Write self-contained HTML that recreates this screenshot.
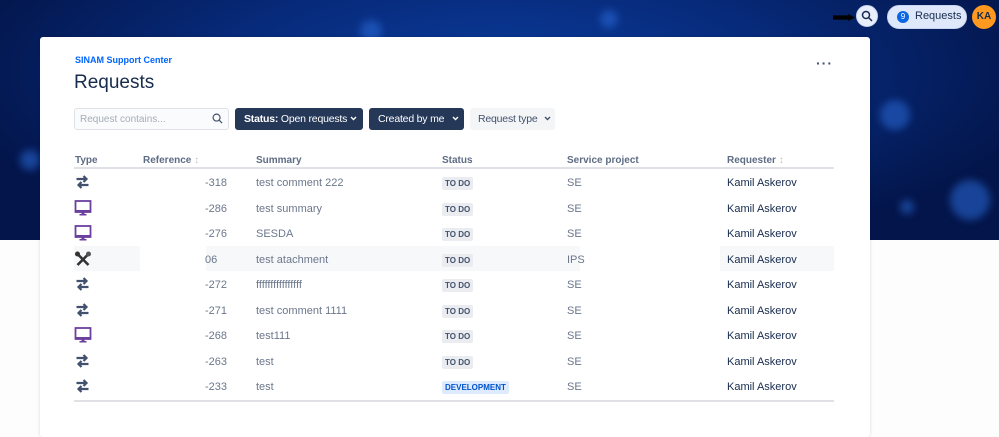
<!DOCTYPE html>
<html><head><meta charset="utf-8"><style>
*{margin:0;padding:0;box-sizing:border-box}
body{width:999px;height:414px;overflow:hidden;background:#fdfdfe;font-family:"Liberation Sans",sans-serif;position:relative}
.banner{position:absolute;left:0;top:0;width:999px;height:240px;background:radial-gradient(ellipse at 50% 30%,#0b3c9c 0,#072a7a 40%,#03154a 80%),#031040;overflow:hidden}
.dot{position:absolute;border-radius:50%;background:#2a6ad8;filter:blur(4px);opacity:.55}
.card{position:absolute;left:40px;top:37px;width:830px;height:400px;background:#fff;border-radius:3px;box-shadow:0 0 3px rgba(0,0,0,.15)}
.abs{position:absolute}
.t{position:absolute;font-size:11px;color:#6b778c;white-space:nowrap}
.h{position:absolute;font-size:10px;color:#5e6c84;font-weight:bold;top:155px}
.lz{position:absolute;background:#ebecf0;border-radius:2px;font-size:8px;font-weight:bold;color:#42526e;padding:2px 3px;white-space:nowrap}
.req{color:#172b4d}
.btn{position:absolute;top:108px;height:22px;border-radius:3px;font-size:10.5px;line-height:22px;padding-left:9px;white-space:nowrap;letter-spacing:-0.2px}
.btn svg{position:absolute;top:8px}
</style></head><body>
<div class="banner">
<div class="dot" style="left:880px;top:100px;width:30px;height:30px"></div>
<div class="dot" style="left:950px;top:180px;width:40px;height:40px"></div>
<div class="dot" style="left:20px;top:150px;width:20px;height:20px"></div>
<div class="dot" style="left:360px;top:20px;width:22px;height:22px"></div>
<div class="dot" style="left:900px;top:200px;width:14px;height:14px"></div>
<div class="dot" style="left:150px;top:60px;width:14px;height:14px"></div>
<div class="dot" style="left:600px;top:10px;width:18px;height:18px"></div>
</div>
<div class="abs" style="left:833px;top:14px;width:22px;height:7px;background:#000;clip-path:polygon(0 20%,70% 20%,70% 0,100% 50%,70% 100%,70% 80%,0 80%)"></div>
<div class="abs" style="left:856px;top:5px;width:22px;height:22px;border-radius:50%;background:#e8eefc;border:1px solid #c8d4f0"></div>
<svg class="abs" style="left:861px;top:10px" width="12" height="12" viewBox="0 0 12 12"><circle cx="5" cy="5" r="3.5" fill="none" stroke="#172b4d" stroke-width="1.5"/><path d="M7.5 7.5L11 11" stroke="#172b4d" stroke-width="1.5"/></svg>
<div class="abs" style="left:887px;top:5px;width:80px;height:24px;border-radius:12px;background:#dfe8fa;border:1px solid #c8d4f0"></div>
<div class="abs" style="left:897px;top:11px;width:12px;height:12px;border-radius:50%;background:#0b66e4;color:#fff;font-size:8px;text-align:center;line-height:12px">9</div>
<div class="abs" style="left:915px;top:10px;font-size:11px;color:#172b4d">Requests</div>
<div class="abs" style="left:972px;top:5px;width:24px;height:24px;border-radius:50%;background:#ff991f;color:#172b4d;font-size:10px;font-weight:bold;text-align:center;line-height:24px">KA</div>

<div class="card"></div>
<div class="abs" style="left:75px;top:55px;font-size:9px;font-weight:bold;color:#0065ff">SINAM Support Center</div>
<div class="abs" style="left:74px;top:72px;font-size:19px;color:#172b4d">Requests</div>
<div class="abs" style="left:816px;top:55px;font-size:14px;color:#42526e;letter-spacing:1px;font-weight:bold">···</div>

<div class="abs" style="left:74px;top:108px;width:155px;height:22px;border:1px solid #dfe1e6;border-radius:3px;background:#fafbfc"></div>
<div class="abs" style="left:80px;top:114px;font-size:10px;color:#a5adba">Request contains...</div>
<svg class="abs" style="left:212px;top:113px" width="11" height="11" viewBox="0 0 12 12"><circle cx="5" cy="5" r="3.8" fill="none" stroke="#42526e" stroke-width="1.3"/><path d="M7.8 7.8L11 11" stroke="#42526e" stroke-width="1.3"/></svg>
<div class="btn" style="left:235px;width:128px;background:#253858;color:#fff"><b>Status:</b> Open requests<svg style="left:115px" width="7" height="5" viewBox="0 0 7 5"><path d="M1 1l2.5 2.5L6 1" fill="none" stroke="#fff" stroke-width="1.4"/></svg></div>
<div class="btn" style="left:369px;width:95px;background:#253858;color:#fff">Created by me<svg style="left:83px" width="7" height="5" viewBox="0 0 7 5"><path d="M1 1l2.5 2.5L6 1" fill="none" stroke="#fff" stroke-width="1.4"/></svg></div>
<div class="btn" style="left:470px;width:85px;background:#f4f5f7;color:#42526e;padding-left:8px">Request type<svg style="left:74px" width="7" height="5" viewBox="0 0 7 5"><path d="M1 1l2.5 2.5L6 1" fill="none" stroke="#42526e" stroke-width="1.4"/></svg></div>

<div class="h" style="left:75px">Type</div>
<div class="h" style="left:143px">Reference <span style="color:#c1c7d0">↕</span></div>
<div class="h" style="left:256px">Summary</div>
<div class="h" style="left:442px">Status</div>
<div class="h" style="left:567px">Service project</div>
<div class="h" style="left:727px">Requester <span style="color:#c1c7d0">↕</span></div>
<div class="abs" style="left:74px;top:167px;width:760px;height:2px;background:#dfe1e6"></div>
<div class="abs" style="left:74px;top:400px;width:760px;height:2px;background:#dfe1e6"></div>
<div class="abs" style="left:74px;top:246px;width:66px;height:25px;background:#f7f8fa"></div>
<div class="abs" style="left:206px;top:246px;width:374px;height:25px;background:#f7f8fa"></div>
<div class="abs" style="left:720px;top:246px;width:114px;height:25px;background:#f7f8fa"></div>

<svg width="0" height="0" style="position:absolute"><defs>
<g id="sw"><path d="M2 5h10M9 2l3 3-3 3M14 11H4M7 8l-3 3 3 3" fill="none" stroke="#42526e" stroke-width="2.2"/></g>
<g id="pc"><rect x="1" y="1" width="15" height="11" fill="none" stroke="#6b3f9e" stroke-width="1.8"/><rect x="1" y="10" width="15" height="2" fill="#6b3f9e"/><rect x="7" y="12" width="3" height="2" fill="#6b3f9e"/><rect x="5" y="14" width="7" height="1.5" fill="#6b3f9e"/></g>
<g id="wr"><path d="M3 3l11 11M14 3L3 14" stroke="#333" stroke-width="2.6"/><circle cx="3" cy="3" r="2.5" fill="#333"/><circle cx="14" cy="3" r="2.5" fill="#555"/></g>
</defs></svg>

<div id="rows"></div>
<script>
var d=[["sw","-318","test comment 222","TO DO","SE"],["pc","-286","test summary","TO DO","SE"],["pc","-276","SESDA","TO DO","SE"],["wr","06","test atachment","TO DO","IPS"],["sw","-272","ffffffffffffffff","TO DO","SE"],["sw","-271","test comment 1111","TO DO","SE"],["pc","-268","test111","TO DO","SE"],["sw","-263","test","TO DO","SE"],["sw","-233","test","DEVELOPMENT","SE"]];
var h="";d.forEach(function(r,i){var y=183+i*25.5;
h+='<svg class="abs" style="left:74px;top:'+(y-9)+'px" width="18" height="17" viewBox="0 0 17 17"><use href="#'+r[0]+'"/></svg>';
h+='<div class="t" style="left:205px;top:'+(y-6)+'px">'+r[1]+'</div>';
h+='<div class="t" style="left:256px;top:'+(y-6)+'px">'+r[2]+'</div>';
var dev=r[3]!="TO DO";
h+='<div class="lz" style="left:442px;top:'+(y-6)+'px;'+(dev?'background:#deebff;color:#0052cc':'')+'">'+r[3]+'</div>';
h+='<div class="t" style="left:567px;top:'+(y-6)+'px">'+r[4]+'</div>';
h+='<div class="t req" style="left:727px;top:'+(y-6)+'px">Kamil Askerov</div>';});
document.getElementById("rows").innerHTML=h;
</script>
</body></html>
